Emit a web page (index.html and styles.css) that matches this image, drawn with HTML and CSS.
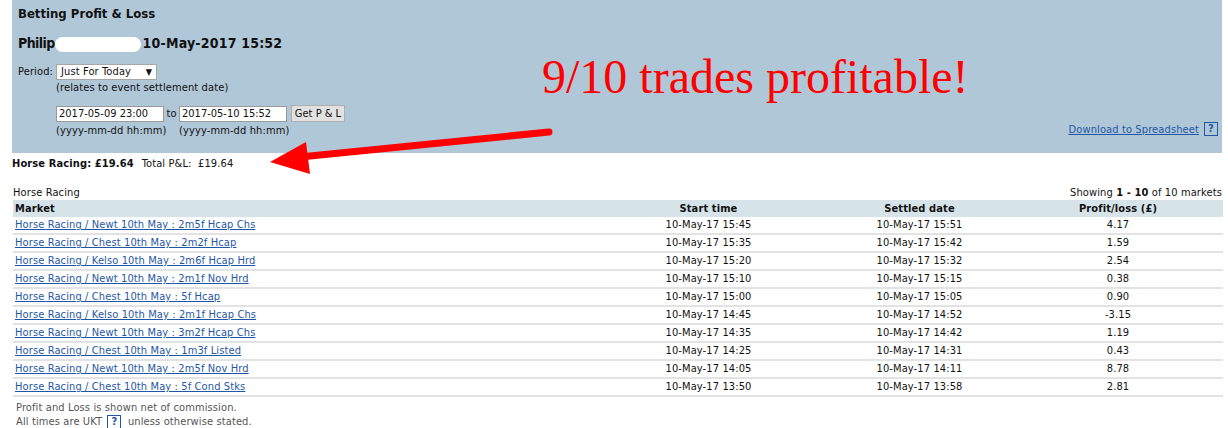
FILE: index.html
```html
<!DOCTYPE html>
<html>
<head>
<meta charset="utf-8">
<link rel="stylesheet" href="styles.css">
</head>
<body>
<div class="page">
  <div class="panel">
    <div class="title">Betting Profit &amp; Loss</div>
    <div class="who"><span class="fname">Philip</span><span class="redact"></span>10-May-2017 15:52</div>
    <div class="period">
      <span class="lbl">Period:</span>
      <span class="select">Just For Today<span class="caret">▼</span></span>
    </div>
    <div class="hint">(relates to event settlement date)</div>
    <div class="dates">
      <input class="inp" type="text" value="2017-05-09 23:00">
      <span class="to">to</span>
      <input class="inp" type="text" value="2017-05-10 15:52">
      <button class="btn">Get P &amp; L</button>
    </div>
    <div class="fmtrow">
      <span class="fmt">(yyyy-mm-dd hh:mm)</span>
      <span class="fmt">(yyyy-mm-dd hh:mm)</span>
      <span class="dl"><a href="#">Download to Spreadsheet</a> <span class="qbox">?</span></span>
    </div>
  </div>
  <div class="summary"><b>Horse Racing: £19.64</b><span class="total">Total P&amp;L:&nbsp; £19.64</span></div>
  <div class="caption"><span>Horse Racing</span><span>Showing <b>1 - 10</b> of 10 markets</span></div>
  <table class="pl">
    <thead>
      <tr><th class="c-m">Market</th><th class="c-s">Start time</th><th class="c-d">Settled date</th><th class="c-p">Profit/loss (£)</th></tr>
    </thead>
    <tbody>
      <tr><td><a href="#">Horse Racing / Newt 10th May : 2m5f Hcap Chs</a></td><td>10-May-17 15:45</td><td>10-May-17 15:51</td><td class="c-p">4.17</td></tr>
      <tr><td><a href="#">Horse Racing / Chest 10th May : 2m2f Hcap</a></td><td>10-May-17 15:35</td><td>10-May-17 15:42</td><td class="c-p">1.59</td></tr>
      <tr><td><a href="#">Horse Racing / Kelso 10th May : 2m6f Hcap Hrd</a></td><td>10-May-17 15:20</td><td>10-May-17 15:32</td><td class="c-p">2.54</td></tr>
      <tr><td><a href="#">Horse Racing / Newt 10th May : 2m1f Nov Hrd</a></td><td>10-May-17 15:10</td><td>10-May-17 15:15</td><td class="c-p">0.38</td></tr>
      <tr><td><a href="#">Horse Racing / Chest 10th May : 5f Hcap</a></td><td>10-May-17 15:00</td><td>10-May-17 15:05</td><td class="c-p">0.90</td></tr>
      <tr><td><a href="#">Horse Racing / Kelso 10th May : 2m1f Hcap Chs</a></td><td>10-May-17 14:45</td><td>10-May-17 14:52</td><td class="c-p">-3.15</td></tr>
      <tr><td><a href="#">Horse Racing / Newt 10th May : 3m2f Hcap Chs</a></td><td>10-May-17 14:35</td><td>10-May-17 14:42</td><td class="c-p">1.19</td></tr>
      <tr><td><a href="#">Horse Racing / Chest 10th May : 1m3f Listed</a></td><td>10-May-17 14:25</td><td>10-May-17 14:31</td><td class="c-p">0.43</td></tr>
      <tr><td><a href="#">Horse Racing / Newt 10th May : 2m5f Nov Hrd</a></td><td>10-May-17 14:05</td><td>10-May-17 14:11</td><td class="c-p">8.78</td></tr>
      <tr><td><a href="#">Horse Racing / Chest 10th May : 5f Cond Stks</a></td><td>10-May-17 13:50</td><td>10-May-17 13:58</td><td class="c-p">2.81</td></tr>
    </tbody>
  </table>
  <div class="foot">
    <div>Profit and Loss is shown net of commission.</div>
    <div>All times are UKT <span class="qbox">?</span> &nbsp;unless otherwise stated.</div>
  </div>

  <div class="annot">9/10 trades profitable!</div>
  <svg class="arrow" width="300" height="60" viewBox="260 125 300 60">
    <line x1="549" y1="132" x2="300" y2="157" stroke="#ff0000" stroke-width="7" stroke-linecap="round"/>
    <polygon points="306,142 270,162 310,174" fill="#ff0000"/>
  </svg>
</div>
</body>
</html>
```
FILE: styles.css
```css
html, body { margin: 0; padding: 0; background: #fff; }
body {
  font-family: "DejaVu Sans Condensed", "DejaVu Sans", sans-serif;
  font-stretch: condensed;
  font-size: 11px;
  letter-spacing: 0.12px;
  color: #111;
}
.page { position: relative; padding: 0 6px 0 12px; }
.panel {
  background: #b0c7d7;
  height: 153px;
  padding: 0 6px;
  box-sizing: border-box;
  position: relative;
}
.title { font-size: 13px; font-weight: bold; padding-top: 5px; line-height: 17px; letter-spacing: 0; }
.who { font-size: 14px; font-weight: bold; margin-top: 12px; line-height: 18px; display: flex; align-items: center; letter-spacing: 0.2px; }
.fname { letter-spacing: -0.6px; }
.redact { display: inline-block; width: 86px; height: 15px; background: #fff; border-radius: 8px; margin: 2px 2px 0 0; }
.period { margin-top: 11px; display: flex; align-items: center; height: 17px; }
.lbl { width: 38px; }
.select {
  display: inline-flex; justify-content: space-between; align-items: center;
  background: #fff; border: 1px solid #a6a6a6;
  padding: 0 4px; box-sizing: border-box; width: 101px; height: 16px;
}
.caret { font-size: 9px; }
.hint { margin-left: 38px; line-height: 14px; margin-top: 1px; }
.dates { margin-top: 10px; margin-left: 38px; display: flex; align-items: center; height: 17px; }
.inp {
  width: 108px; height: 16px; box-sizing: border-box; border: 1px solid #9a9a9a;
  font: inherit; font-size: 11px; padding: 0 2px; color: #111; background: #fff;
}
.to { width: 15px; text-align: center; }
.btn {
  margin-left: 4px; height: 17px; width: 54px; padding: 0; font: inherit; font-size: 11px;
  background: #e1e1e1; border: 1px solid #adadad; color: #111;
}
.fmtrow { margin-left: 38px; display: flex; align-items: center; height: 14px; margin-top: 1px; }
.fmt { width: 123px; }
.dl { margin-left: auto; margin-right: -2px; display: flex; align-items: center; margin-top: -2px; }
a { color: #1f57a5; text-decoration: underline; }
.qbox {
  display: inline-block; width: 12px; height: 12px; border: 1px solid #1f57a5;
  color: #1f57a5; font-weight: bold; text-align: center; line-height: 12px; font-size: 11px;
  margin-left: 5px;
}
.summary { line-height: 14px; margin-top: 4px; }
.total { margin-left: 8px; }
.caption { display: flex; justify-content: space-between; margin-top: 15px; line-height: 14px; padding-left: 1px; }
.pl { width: 1210px; margin-left: 1px; border-collapse: collapse; }
.pl th { background: #d6e4ea; font-weight: bold; height: 17px; padding: 0; text-align: center; font-size: 11px; }
.pl th.c-m { text-align: left; padding-left: 2px; width: 588px; }
.pl th.c-s, .pl th.c-d { width: 211px; }
.pl td { height: 16px; border-bottom: 2px solid #e3e3e3; padding: 0; line-height: 16px; text-align: center; vertical-align: middle; }
.pl td:first-child { text-align: left; padding-left: 2px; }
.c-p { padding-right: 12px !important; }
.foot { color: #555; margin-top: 4px; margin-left: 4px; line-height: 14px; }
.foot .qbox { margin-left: 2px; }
.annot {
  position: absolute; left: 542px; top: 49px;
  font-family: "Liberation Serif", serif; font-size: 48px; color: #ff0000; line-height: 56px; letter-spacing: 0;
}
.arrow { position: absolute; left: 260px; top: 125px; }
```
